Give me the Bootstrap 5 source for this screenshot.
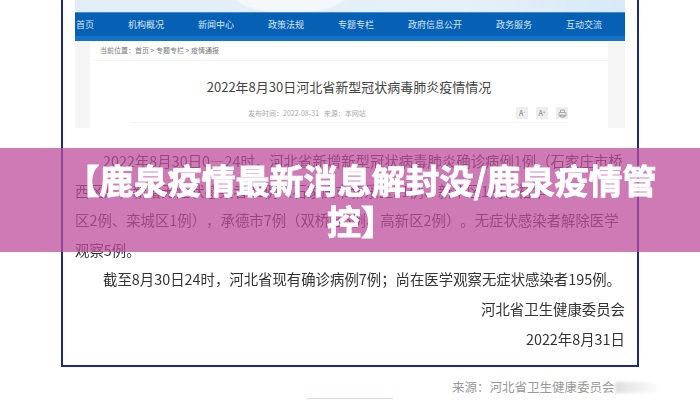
<!DOCTYPE html>
<html lang="zh-CN">
<head>
    <meta charset="UTF-8">
    <meta name="viewport" content="width=device-width, initial-scale=1">
    <title>鹿泉疫情</title>
    <link href="https://cdn.jsdelivr.net/npm/bootstrap@5.3.0/dist/css/bootstrap.min.css" rel="stylesheet">
    <script src="https://cdn.jsdelivr.net/npm/bootstrap@5.3.0/dist/js/bootstrap.bundle.min.js"></script>
    <style>
        body {
            width: 700px;
            height: 400px;
            overflow: hidden;
            background: #fff;
            font-family: "Noto Sans CJK SC", "Liberation Sans", sans-serif;
            color: #333;
            text-spacing-trim: space-all;
        }
        .shot-frame {
            width: 578px;
            height: 367px;
            margin-left: 61px;
            padding: 0 12px;
            border: 2px solid #1c2a86;
            border-top: 0;
            filter: blur(0.4px);
        }
        .site-strip {
            height: 12px;
            background: radial-gradient(ellipse 60px 22px at 215px -8px, #f4f8fc 95%, transparent 100%),
                linear-gradient(90deg, #e2edf8 0%, #e6f0f9 70%, #d9e9f8 100%);
        }
        .site-nav {
            height: 29px;
            gap: 34px;
            padding: 0 0 5px 1px;
            background: linear-gradient(#0660b4 0, #0660b4 82%, #1273c6 82%);
            border-top: 1px solid #3d8fd0;
            font-size: 9px;
            color: #d7e6f5;
            white-space: nowrap;
        }
        .side-wrap { height: 87px; background: #f5f5f6; padding: 0 17px 0 15px; }
        .paper { background: #fff; height: 100%; }
        .crumbs {
            height: 20px;
            padding-left: 10px;
            font-size: 7px;
            line-height: 19px;
            color: #777;
            border-bottom: 1px solid #f4f4f4;
        }
        .doc-title {
            padding-top: 15px;
            height: 43px;
            font-size: 13px;
            line-height: 22px;
            text-align: center;
            color: #444;
        }
        .doc-meta {
            margin: 0 40px;
            padding-left: 118px;
            height: 19px;
            font-size: 7px;
            color: #aaa;
            border-bottom: 1px solid #f4f4f4;
        }
        .doc-meta .tool-btn {
            width: 12px;
            height: 12px;
            background: #eeeeee;
            color: #777;
            font-size: 7px;
            line-height: 12px;
            text-align: center;
        }
        .doc-meta sup { font-size: 5px; top: -2px; }
        .doc-body {
            padding-top: 18px;
            font-size: 14.4px;
            line-height: 29.6px;
            color: #333;
        }
        .doc-body p { margin: 0; white-space: nowrap; }
        .indent-line { padding-left: 28px; }
        .source-line {
            margin: 11px 0 0 452px;
            font-size: 12.5px;
            line-height: 18px;
            color: #999;
            white-space: nowrap;
        }
        .smear {
            width: 45px;
            height: 11px;
            background: linear-gradient(90deg, #ddd, rgba(235, 235, 235, 0));
            filter: blur(1.5px);
        }
        .pink-rule {
            width: 86px;
            height: 1px;
            margin: 2px 0 0 307px;
            background: #f3d5dc;
        }
        .title-band {
            position: absolute;
            top: 148px;
            left: 0;
            width: 700px;
            height: 104px;
            padding: 11px 38px 0 60px;
            background: rgba(188, 77, 156, .75);
            color: #fff;
            font-size: 34px;
            font-weight: 700;
            line-height: 41px;
            text-align: center;
            -webkit-text-stroke: 0.8px #fff;
        }
    </style>
</head>
<body>
    <div class="shot-frame">
        <div class="site-strip"></div>
        <div class="site-nav d-flex align-items-center">
            <span>首页</span>
            <span>机构概况</span>
            <span>新闻中心</span>
            <span>政策法规</span>
            <span>专题专栏</span>
            <span>政府信息公开</span>
            <span>政务服务</span>
            <span>互动交流</span>
        </div>
        <div class="side-wrap">
            <div class="paper">
                <div class="crumbs">当前位置：首页 &gt; 专题专栏 &gt; 疫情通报</div>
                <div class="doc-title">2022年8月30日河北省新型冠状病毒肺炎疫情情况</div>
                <div class="doc-meta d-flex align-items-center">
                    <span>发布时间：2022-08-31&nbsp;&nbsp;&nbsp;来源：本网站</span>
                    <div class="d-flex ms-auto gap-2">
                        <span class="tool-btn">A<sup>-</sup></span>
                        <span class="tool-btn">A<sup>+</sup></span>
                        <span class="tool-btn d-flex align-items-center justify-content-center">
                            <svg width="9" height="9" viewBox="0 0 9 9" fill="none" stroke="#999" stroke-width=".8"><path d="M2.5 3V1h4v2M1 3.5h7V7H1zM2.5 6h4v2h-4z"/></svg>
                        </span>
                    </div>
                </div>
            </div>
        </div>
        <div class="doc-body">
            <p class="indent-line">2022年8月30日0—24时，河北省新增新型冠状病毒肺炎确诊病例1例（石家庄市桥</p>
            <p>西区），新增无症状感染者21例（石家庄市新乐区21例、新华区1例、裕华</p>
            <p>区2例、栾城区1例），承德市7例（双桥区5例、高新区2例）。无症状感染者解除医学</p>
            <p>观察5例。</p>
            <p class="indent-line">截至8月30日24时，河北省现有确诊病例7例；尚在医学观察无症状感染者195例。</p>
            <p class="text-end">河北省卫生健康委员会</p>
            <p class="text-end">2022年8月31日</p>
        </div>
    </div>
    <div class="source-line d-flex align-items-center">来源：河北省卫生健康委员会<div class="smear"></div></div>
    <div class="pink-rule"></div>
    <div class="title-band">【鹿泉疫情最新消息解封没/鹿泉疫情管控】</div>
</body>
</html>
